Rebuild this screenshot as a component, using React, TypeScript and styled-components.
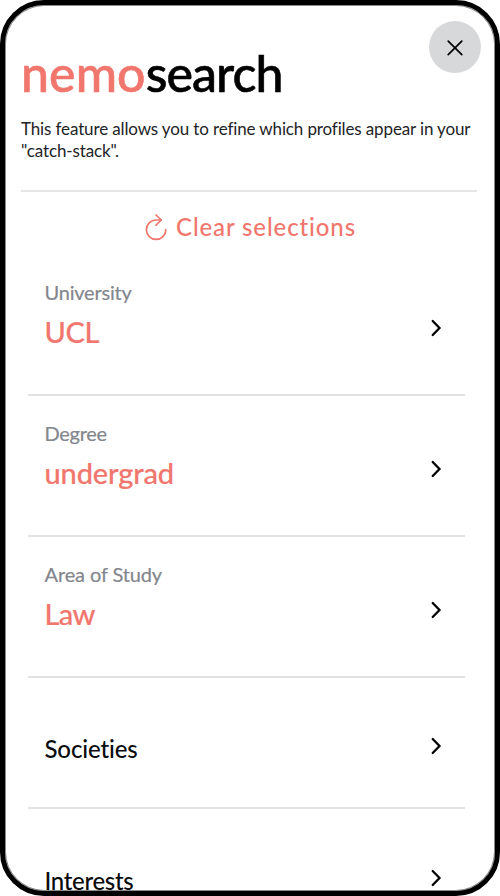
import React from "react";
import styled, { createGlobalStyle } from "styled-components";

const coral = "#f1766d";

const GlobalStyle = createGlobalStyle`
  * { box-sizing: border-box; }
  body { margin: 0; background: #fff; }
  h1, p { margin: 0; }
  button { border: 0; padding: 0; background: none; font: inherit; color: inherit; text-align: left; }
`;

const Phone = styled.div`
  position: relative;
  width: 500px;
  height: 896px;
  border: 5px solid #000;
  border-radius: 44px;
  background: #fff;
  box-shadow: inset 0 0 0 1px #8c8c8c;
  overflow: hidden;
  font-family: Lato, "Liberation Sans", sans-serif;
  color: #0b0c0e;
  white-space: nowrap;
`;

const CloseButton = styled.button`
  position: absolute;
  top: 15.5px;
  right: 14.5px;
  width: 52px;
  height: 52px;
  border-radius: 50%;
  background: #d7d8da;
  display: grid;
  place-items: center;
`;

const Header = styled.header`
  height: 187px;
  margin: 0 18px 0 16px;
  padding-top: 38px;
  border-bottom: 2px solid #e6e6e6;
`;

const Title = styled.h1`
  font-size: 50px;
  font-weight: 500;
  line-height: 60px;
  letter-spacing: -0.9px;
  color: #000;
  -webkit-text-stroke: 0.6px currentColor;
`;

const TitleAccent = styled.span`
  color: ${coral};
  letter-spacing: 0.1px;
`;

const Description = styled.p`
  margin-top: 15px;
  font-size: 17px;
  line-height: 21.5px;
  letter-spacing: -0.13px;
  color: #222326;
`;

const ClearButton = styled.button`
  display: flex;
  align-items: center;
  gap: 9px;
  height: 30px;
  margin: 20px 0 13px 140px;
  color: ${coral};
  font-size: 24px;
  font-weight: 500;
  line-height: 30px;
  letter-spacing: 0.88px;
`;

const List = styled.div`
  margin: 0 30px 0 23px;
`;

const Row = styled.button<{ $tall?: boolean }>`
  display: flex;
  justify-content: space-between;
  align-items: center;
  width: 100%;
  height: ${(p) => (p.$tall ? "141px" : "131.4px")};
  padding: 7px 22px 0 16.5px;
  border-bottom: 2px solid #e2e2e2;
`;

const Field = styled.div`
  display: flex;
  flex-direction: column;
  gap: 10px;
  padding-bottom: 26px;
`;

const Label = styled.span<{ $spacing: number }>`
  font-size: 20px;
  line-height: 24px;
  letter-spacing: ${(p) => p.$spacing}px;
  color: #83868d;
  -webkit-text-stroke: 0.2px currentColor;
`;

const Value = styled.span<{ $spacing: number }>`
  font-size: 29px;
  font-weight: 500;
  line-height: 36px;
  letter-spacing: ${(p) => p.$spacing}px;
  color: ${coral};
  -webkit-text-stroke: 0.2px currentColor;
`;

const Category = styled.span<{ $spacing: number }>`
  padding-top: 6px;
  font-size: 24px;
  font-weight: 500;
  line-height: 30px;
  letter-spacing: ${(p) => p.$spacing}px;
`;

const Chevron = () => (
  <svg width="13" height="18" viewBox="0 0 13 18" fill="none" stroke="#000" strokeWidth="2.3">
    <path d="M2.7 2 9.5 9 2.7 16" strokeLinecap="round" strokeLinejoin="miter" />
  </svg>
);

const CloseIcon = () => (
  <svg width="18" height="18" viewBox="0 0 18 18" fill="none" stroke="#000" strokeWidth="1.7" strokeLinecap="round">
    <path d="M2.2 3.2 15.8 16.6M15.8 3.2 2.2 16.6" />
  </svg>
);

const ResetIcon = () => (
  <svg
    width="22"
    height="27"
    viewBox="0 0 22 27"
    fill="none"
    stroke="currentColor"
    strokeWidth="1.7"
    strokeLinecap="round"
    strokeLinejoin="round"
  >
    <path d="M20.8 15.7A9.7 9.7 0 1 1 11 6H16.3" />
    <path d="M11 1 16.3 6 11 11.2" />
  </svg>
);

type Selection = {
  label: string;
  value?: string;
  labelSpacing: number;
  valueSpacing?: number;
};

const selections: Selection[] = [
  { label: "University", value: "UCL", labelSpacing: -0.2, valueSpacing: -0.4 },
  { label: "Degree", value: "undergrad", labelSpacing: -0.3, valueSpacing: -0.15 },
  { label: "Area of Study", value: "Law", labelSpacing: -0.12, valueSpacing: -0.6 },
  { label: "Societies", labelSpacing: -0.13 },
  { label: "Interests", labelSpacing: -0.33 },
];

export default function App() {
  return (
    <>
      <GlobalStyle />
      <Phone>
        <Header>
          <Title>
            <TitleAccent>nemo</TitleAccent>search
          </Title>
          <Description>
            This feature allows you to refine which profiles appear in your
            <br />
            "catch-stack".
          </Description>
        </Header>
        <CloseButton aria-label="Close">
          <CloseIcon />
        </CloseButton>
        <ClearButton>
          <ResetIcon />
          Clear selections
        </ClearButton>
        <List>
          {selections.map((s) => (
            <Row key={s.label} $tall={Boolean(s.value)}>
              {s.value ? (
                <Field>
                  <Label $spacing={s.labelSpacing}>{s.label}</Label>
                  <Value $spacing={s.valueSpacing ?? 0}>{s.value}</Value>
                </Field>
              ) : (
                <Category $spacing={s.labelSpacing}>{s.label}</Category>
              )}
              <Chevron />
            </Row>
          ))}
        </List>
      </Phone>
    </>
  );
}
